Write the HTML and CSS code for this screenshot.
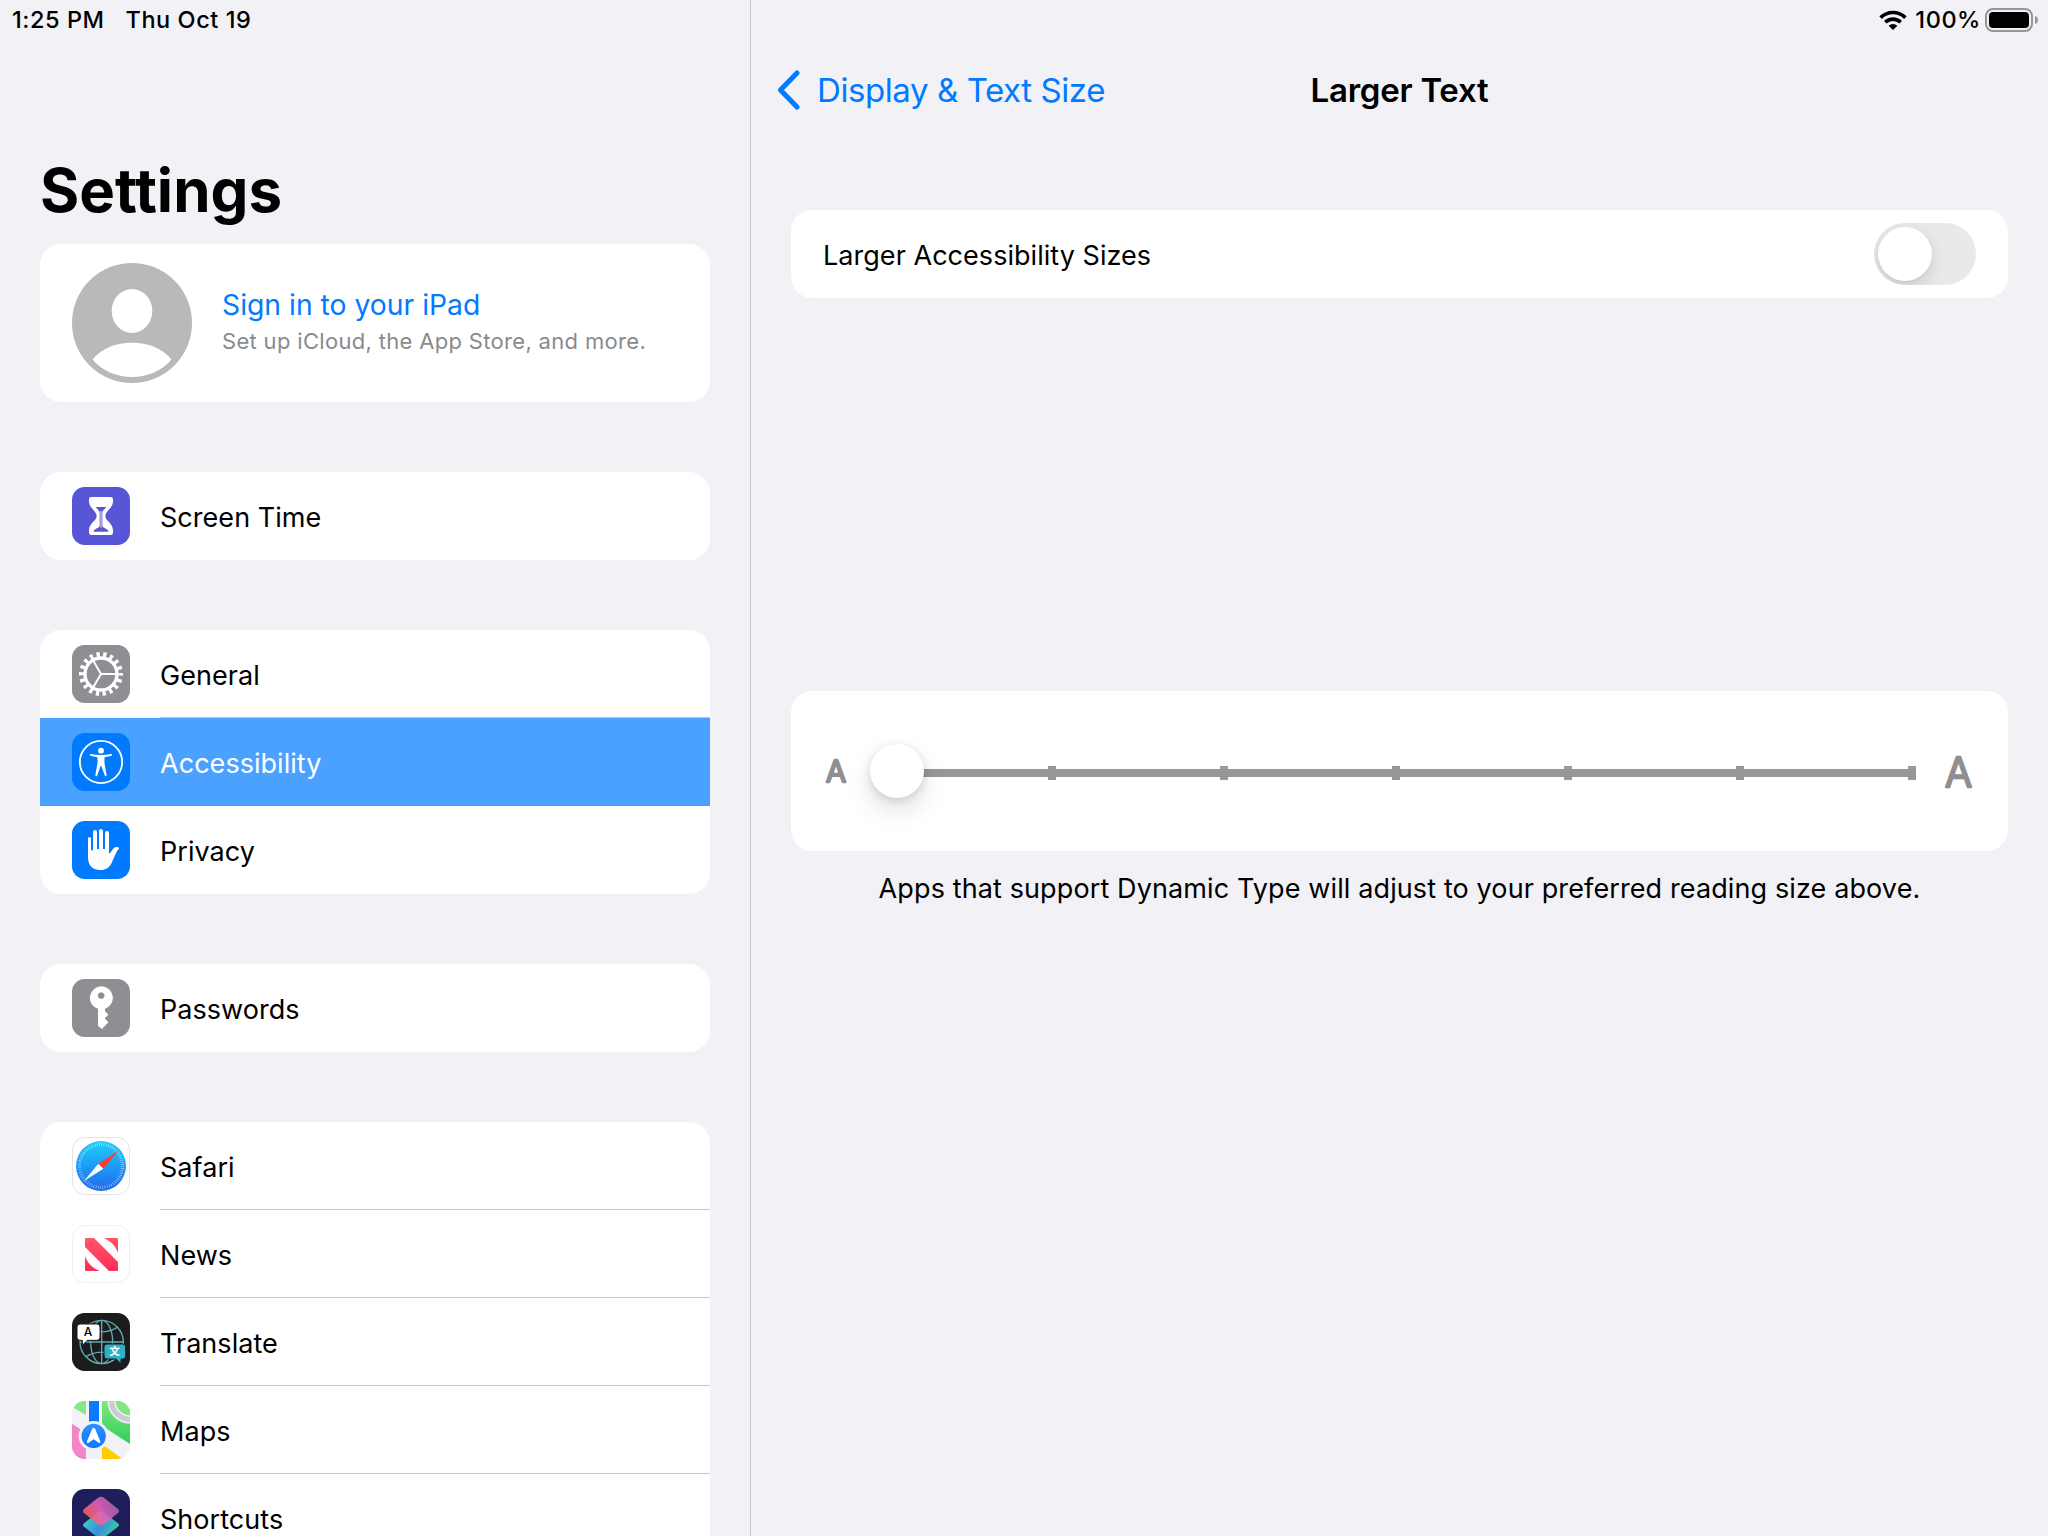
FILE: index.html
```html
<!DOCTYPE html>
<html lang="en">
<head>
<meta charset="utf-8">
<title>Settings</title>
<link rel="stylesheet" href="styles.css">
</head>
<body>
<div class="screen">
  <aside class="sidebar">
    <div class="status status-left"><span class="time">1:25 PM</span><span class="date">Thu Oct 19</span></div>
    <h1 class="title">Settings</h1>

    <section class="card profile">
      <svg class="avatar" viewBox="0 0 120 120">
        <circle cx="60" cy="60" r="60" fill="#b9b9bb"/>
        <ellipse cx="60" cy="48" rx="20.3" ry="22" fill="#fff"/>
        <path d="M20.5 96.500C30 85 44 79.700 60 79.700S90 85 99.500 96.500C90 107.500 76 114 60 114S30 107.500 20.500 96.500z" fill="#fff"/>
      </svg>
      <div class="profile-text">
        <div class="profile-name">Sign in to your iPad</div>
        <div class="profile-sub">Set up iCloud, the App Store, and more.</div>
      </div>
    </section>

    <section class="card group">
      <div class="row">
        <svg class="icon" viewBox="0 0 174 174">
          <rect width="174" height="174" rx="38" fill="#5856d6"/>
          <path fill="#fff" d="M58 30H116Q123 30 123 37V44C122 64 100 72 100 87S122 107 123 129V136Q123 144 116 144H58Q51 144 51 136V129C52 107 74 102 74 87S52 64 51 44V37Q51 30 58 30z"/>
          <path fill="#5856d6" d="M71 60H103C99 66 92 70 91 77V117C93 123 104 125 109 131V134H65V131C70 125 81 123 83 117V77C82 70 75 66 71 60z"/>
          <path d="M87 72V122" stroke="#fff" stroke-width="2.500"/>
        </svg>
        <span class="label">Screen Time</span>
      </div>
    </section>

    <section class="card group">
      <div class="row">
        <svg class="icon" viewBox="0 0 174 174">
          <rect width="174" height="174" rx="38" fill="#8e8e93"/>
          <circle cx="87" cy="87" r="58" fill="none" stroke="#fff" stroke-width="16" pathLength="360" stroke-dasharray="9.500 10.500" stroke-dashoffset="4.750"/>
          <circle cx="87" cy="87" r="48" fill="none" stroke="#fff" stroke-width="10"/>
          <path d="M87 87H135M87 87L63 45.500M87 87L63 128.500" stroke="#fff" stroke-width="6"/>
        </svg>
        <span class="label">General</span>
      </div>
      <div class="row selected">
        <svg class="icon" viewBox="0 0 174 174">
          <rect width="174" height="174" rx="38" fill="#007aff"/>
          <circle cx="87" cy="87" r="63.500" fill="none" stroke="#fff" stroke-width="5.500"/>
          <circle cx="87" cy="53" r="8.700" fill="#fff"/>
          <path fill="#fff" d="M56 63Q87 69 118 63Q121 64 119 68L98 73C96 86 98 94 104 126Q103 131 99 129L88 99H86L75 129Q71 131 70 126C76 94 78 86 76 73L55 68Q53 64 56 63z"/>
        </svg>
        <span class="label">Accessibility</span>
      </div>
      <div class="row">
        <svg class="icon" viewBox="0 0 174 174">
          <rect width="174" height="174" rx="38" fill="#007aff"/>
          <path fill="#fff" d="M48 52.500a4.500 4.500 0 0 1 9 0V88h6V33a6 6 0 0 1 12 0V84h6V30a6 6 0 0 1 12 0V84h6V36a6 6 0 0 1 12 0V98C118 96 122 80 131 78C138 77 143 80 141 83C134 88 130 102 123 116C116 134 108 147 84 147C60 147 48 132 48 108z"/>
        </svg>
        <span class="label">Privacy</span>
      </div>
    </section>

    <section class="card group">
      <div class="row">
        <svg class="icon" viewBox="0 0 174 174">
          <rect width="174" height="174" rx="38" fill="#8e8e93"/>
          <path fill="#fff" fill-rule="evenodd" d="M88 22a34.500 34.500 0 0 1 11 67.200V97L109 107L98 118L109 130L90 150L78 141V89.500A34.500 34.500 0 0 1 88 22zM87.500 40a10 10 0 1 0 .010 0z"/>
        </svg>
        <span class="label">Passwords</span>
      </div>
    </section>

    <section class="card group apps">
      <div class="row">
        <svg class="icon" viewBox="0 0 174 174">
          <defs><linearGradient id="sky" x1="0" y1="0" x2="0" y2="1"><stop offset="0" stop-color="#1fcdfb"/><stop offset="1" stop-color="#1e6af1"/></linearGradient></defs>
          <rect x="1.500" y="1.500" width="171" height="171" rx="37" fill="#fff" stroke="#e4e4e6" stroke-width="3"/>
          <circle cx="87" cy="87" r="75" fill="url(#sky)"/>
          <circle cx="87" cy="87" r="64.500" fill="none" stroke="#fff" stroke-opacity=".7" stroke-width="9" pathLength="360" stroke-dasharray="1.500 4.500"/>
          <path d="M139 42L79 80L94 95z" fill="#ff3b30"/>
          <path d="M36 132L79 80L94 95z" fill="#fff"/>
        </svg>
        <span class="label">Safari</span>
      </div>
      <div class="row">
        <svg class="icon" viewBox="0 0 174 174">
          <defs><linearGradient id="press" gradientUnits="userSpaceOnUse" x1="0" y1="39" x2="0" y2="138"><stop offset="0" stop-color="#ff5569"/><stop offset="1" stop-color="#ff2d55"/></linearGradient></defs>
          <rect x="1.500" y="1.500" width="171" height="171" rx="37" fill="#fff" stroke="#efeff0" stroke-width="3"/>
          <path fill="url(#press)" d="M42 39H66L138 111V135Q138 138 135 138H111L39 66V42Q39 39 42 39zM94 39H135Q138 39 138 42V83C130 62 115 47 94 39zM39 94C47 115 62 130 83 138H42Q39 138 39 135z"/>
        </svg>
        <span class="label">News</span>
      </div>
      <div class="row">
        <svg class="icon" viewBox="0 0 174 174">
          <rect width="174" height="174" rx="38" fill="#1c1c1c"/>
          <g fill="none" stroke="#64a9b5" stroke-width="4">
            <circle cx="89" cy="87" r="65"/>
            <ellipse cx="89" cy="87" rx="33" ry="65"/>
            <path d="M89 22V152M24 87H154M42 43Q89 70 136 43M42 131Q89 104 136 131"/>
          </g>
          <path d="M24 33H75Q84 33 84 42V73Q84 82 75 82H46L31 97V82H24Q15 82 15 73V42Q15 33 24 33z" fill="#fff" stroke="#1c1c1c" stroke-width="3"/>
          <path d="M105 93H152Q161 93 161 102V129Q161 138 152 138H147V152L132 138H105Q96 138 96 129V102Q96 93 105 93z" fill="#30b0c7" stroke="#1c1c1c" stroke-width="3"/>
          <text class="glyph-latin" x="48" y="70">A</text>
          <text class="glyph-han" x="128" y="127">文</text>
        </svg>
        <span class="label">Translate</span>
      </div>
      <div class="row">
        <svg class="icon" viewBox="0 0 174 174">
          <defs>
            <clipPath id="tile"><rect width="174" height="174" rx="38"/></clipPath>
            <linearGradient id="park" x1="0" y1="0" x2="0" y2="1"><stop offset="0" stop-color="#7fe881"/><stop offset="1" stop-color="#2fcf55"/></linearGradient>
            <linearGradient id="route" x1="0" y1="0" x2="0" y2="1"><stop offset="0" stop-color="#2e8dff"/><stop offset="1" stop-color="#0a7aff"/></linearGradient>
          </defs>
          <g clip-path="url(#tile)">
            <rect width="174" height="174" fill="#f2f1f6"/>
            <path d="M0 0H42V42L0 17z" fill="#83e886"/>
            <path d="M90 0H174V129L90 74z" fill="url(#park)"/>
            <circle cx="174" cy="0" r="55" fill="#83e67f" stroke="#f2f1f6" stroke-width="25"/>
            <circle cx="174" cy="0" r="55" fill="none" stroke="#cccbd0" stroke-width="16"/>
            <path d="M0 68L42 95V174H0z" fill="#f385c9"/>
            <path d="M90 130L152 174H90z" fill="#ffcc00"/>
            <rect x="51" width="30" height="70" fill="#0a7aff"/>
            <circle cx="65" cy="105" r="45" fill="#f2f1f6"/>
            <circle cx="65" cy="105" r="36.500" fill="url(#route)"/>
            <path d="M65 80Q68 80 70 85L85 121Q86 128 80 125L65 115L50 125Q44 128 45 121L60 85Q62 80 65 80z" fill="#fff"/>
          </g>
        </svg>
        <span class="label">Maps</span>
      </div>
      <div class="row">
        <svg class="icon" viewBox="0 0 174 174">
          <defs>
            <linearGradient id="warm" x1=".1" y1=".7" x2=".85" y2=".4"><stop offset="0" stop-color="#ff5f55"/><stop offset=".5" stop-color="#ee62b4"/><stop offset="1" stop-color="#b963b4"/></linearGradient>
            <linearGradient id="cool" x1="0" y1=".3" x2="1" y2=".7"><stop offset="0" stop-color="#38d3c0"/><stop offset=".5" stop-color="#3a8fdc"/><stop offset="1" stop-color="#35d29a"/></linearGradient>
          </defs>
          <rect width="174" height="174" rx="38" fill="#1d1e5b"/>
          <path d="M79 69Q87 63 95 69L137 102Q145 108 137 114L95 147Q87 153 79 147L37 114Q29 108 37 102z" fill="url(#cool)"/>
          <path d="M77 27Q87 20 97 27L137 59Q145 66 137 73L97 105Q87 112 77 105L37 73Q29 66 37 59z" fill="url(#warm)" fill-opacity=".88"/>
        </svg>
        <span class="label">Shortcuts</span>
      </div>
    </section>
  </aside>

  <main class="detail">
    <div class="status status-right">
      <svg class="wifi" viewBox="0 0 28 20">
        <path d="M1.600 7.600A17.600 17.600 0 0 1 26.400 7.600M6.300 12.200A11 11 0 0 1 21.700 12.200" fill="none" stroke="#000" stroke-width="3.700"/>
        <path d="M14 20L9.600 15.700A6.300 6.300 0 0 1 18.400 15.700z"/>
      </svg>
      <span class="percent">100%</span>
      <svg class="battery" viewBox="0 0 53 24">
        <rect x="1" y="1" width="46" height="22" rx="7" fill="none" stroke="#96969a" stroke-width="2"/>
        <rect x="4" y="4" width="40" height="16" rx="4"/>
        <path d="M50 8Q53 9 53 12T50 16z" fill="#96969a"/>
      </svg>
    </div>

    <header class="nav">
      <a class="back">
        <svg class="chevron" viewBox="0 0 24 40"><path d="M21 3L4.500 20L21 37" fill="none" stroke="#007aff" stroke-width="5" stroke-linecap="round" stroke-linejoin="round"/></svg>
        <span>Display &amp; Text Size</span>
      </a>
      <h2 class="nav-title">Larger Text</h2>
    </header>

    <section class="card option">
      <span class="label">Larger Accessibility Sizes</span>
      <div class="switch"><div class="knob"></div></div>
    </section>

    <section class="card slider">
      <svg class="size-small" viewBox="0 0 22 26"><text class="size-glyph" x="11" y="23.500" font-size="29.500" textLength="20" lengthAdjust="spacingAndGlyphs">A</text></svg>
      <div class="track">
        <i class="tick"></i><i class="tick"></i><i class="tick"></i><i class="tick"></i><i class="tick"></i><i class="tick"></i><i class="tick"></i>
        <div class="thumb"></div>
      </div>
      <svg class="size-large" viewBox="0 0 30 36"><text class="size-glyph" x="15.500" y="33.500" font-size="41" textLength="27" lengthAdjust="spacingAndGlyphs">A</text></svg>
    </section>
    <p class="caption">Apps that support Dynamic Type will adjust to your preferred reading size above.</p>
  </main>
</div>
</body>
</html>
```
FILE: styles.css
```css
* { box-sizing: border-box; }

body {
  margin: 0;
  background: #f2f1f6;
  color: #000;
  font-family: Inter, "Liberation Sans", sans-serif;
  font-size: 27px;
}

h1, h2, p { margin: 0; }
svg { display: block; flex: none; }

.screen {
  display: flex;
  width: 2048px;
  height: 1536px;
  overflow: hidden;
}

.sidebar {
  width: 751px;
  flex: none;
  padding: 0 40px;
  border-right: 1px solid #c6c6c8;
  overflow: hidden;
}

.detail {
  flex: 1;
  padding: 0 40px;
}

.status {
  display: flex;
  align-items: center;
  height: 40px;
  font-size: 23.5px;
  font-weight: 500;
  line-height: 28px;
  letter-spacing: .55px;
  white-space: nowrap;
}

.status-left {
  margin-left: -28px;
  gap: 21px;
}

.status-right {
  justify-content: flex-end;
  margin-right: -30px;
}

.status .percent { margin: 0 4px 0 8px; }
.wifi { width: 28px; height: 20px; }
.battery { width: 53px; height: 24px; }

.title {
  height: 204px;
  padding-top: 114px;
  font-size: 60px;
  line-height: 73px;
  font-weight: 700;
  white-space: nowrap;
}

.card {
  background: #fff;
  border-radius: 21px;
  overflow: hidden;
}

.profile {
  display: flex;
  align-items: center;
  height: 158px;
  padding-left: 32px;
  gap: 30px;
  margin-bottom: 70px;
}

.avatar { width: 120px; height: 120px; }
.profile-text { padding-bottom: 3px; }
.profile-name {
  font-size: 28.3px;
  line-height: 38px;
  color: #007aff;
}
.profile-sub {
  font-size: 22px;
  line-height: 34px;
  letter-spacing: .32px;
  color: #8a8a8e;
}

.group { margin-bottom: 70px; }

.row {
  display: flex;
  align-items: center;
  height: 88px;
  padding-left: 32px;
  gap: 30px;
}

.row .label {
  flex: 1;
  height: 88px;
  line-height: 91px;
  border-bottom: 1px solid #c6c6c8;
}
.row:last-child .label, .selected .label { border-bottom: 0; }

.selected {
  background: #4ba1ff;
  color: #fff;
}

.icon { width: 58px; height: 58px; }
.label {
  letter-spacing: .04px;
  white-space: nowrap;
}

.glyph-latin {
  font: 500 36px Inter, sans-serif;
  text-anchor: middle;
}
.glyph-han {
  font: 700 32px "Noto Sans CJK SC", sans-serif;
  text-anchor: middle;
  fill: #fff;
}

.nav {
  display: grid;
  grid-template-columns: 1fr auto 1fr;
  align-items: center;
  height: 100px;
  margin-left: -15px;
  margin-right: -15px;
  font-size: 33px;
}
.back {
  display: flex;
  align-items: center;
  gap: 17px;
  color: #007aff;
  letter-spacing: -.42px;
  white-space: nowrap;
}
.chevron { width: 24px; height: 40px; }
.nav-title {
  font-size: 33px;
  font-weight: 600;
  letter-spacing: -.25px;
}

.option {
  display: flex;
  align-items: center;
  justify-content: space-between;
  height: 88px;
  margin-top: 70px;
  padding: 0 32px;
}
.option .label { line-height: 84px; padding-top: 4px; }

.switch {
  width: 102px;
  height: 62px;
  padding: 4px;
  border-radius: 31px;
  background: #e9e9eb;
  overflow: hidden;
}
.knob {
  width: 54px;
  height: 54px;
  border-radius: 50%;
  background: #fff;
  box-shadow: 0 6px 16px rgba(0, 0, 0, .13), 0 2px 2px rgba(0, 0, 0, .04);
}

.slider {
  display: flex;
  align-items: center;
  height: 160px;
  margin-top: 393px;
  padding: 0 35px 0 34px;
}
.size-small { width: 22px; height: 26px; overflow: visible; }
.size-large { width: 30px; height: 36px; margin-left: auto; overflow: visible; }
.size-glyph {
  font-family: Inter, sans-serif;
  font-weight: 300;
  text-anchor: middle;
  fill: #8e8e93;
  stroke: #8e8e93;
  stroke-width: 2.5px;
  stroke-linejoin: round;
}

.track {
  position: relative;
  display: flex;
  align-items: center;
  justify-content: space-between;
  width: 1040px;
  height: 14px;
  margin: 4px 0 0 29px;
  background: linear-gradient(#979797, #979797) center / 100% 8px no-repeat;
}
.tick {
  width: 8px;
  height: 14px;
  background: #979797;
}
.thumb {
  position: absolute;
  left: -6px;
  top: -22px;
  width: 54px;
  height: 54px;
  border-radius: 50%;
  background: #fff;
  box-shadow: 0 12px 26px rgba(0, 0, 0, .13), 0 2px 8px rgba(0, 0, 0, .13);
}

.caption {
  margin-top: 20px;
  line-height: 36px;
  letter-spacing: .115px;
  text-align: center;
  white-space: nowrap;
}
```
